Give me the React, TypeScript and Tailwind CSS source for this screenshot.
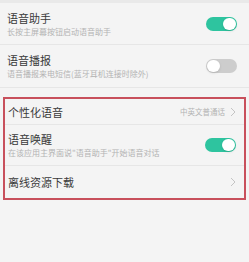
import React from 'react';

const font = { fontFamily: '"Noto Sans CJK SC", "Noto Sans", sans-serif' };

const Toggle: React.FC<{ on: boolean }> = ({ on }) => (
  <div
    className={`relative h-[14px] w-[31px] rounded-full ${on ? 'bg-[#2ec49f]' : 'bg-[#cdcdcd]'}`}
  >
    <div
      className={`absolute top-[1px] h-[12px] w-[13px] rounded-full bg-white shadow-sm ${on ? 'right-[1px]' : 'left-[1px]'}`}
    />
  </div>
);

const Chevron: React.FC = () => (
  <svg width="6" height="10" viewBox="0 0 6 10" className="ml-[5px]">
    <polyline points="1,1 5,5 1,9" fill="none" stroke="#c4c4c4" strokeWidth="1" />
  </svg>
);

const App: React.FC = () => {
  return (
    <div className="w-[249px] h-[262px] bg-[#f4f4f4] overflow-hidden" style={font}>
      <div className="h-[3px] bg-[#e9e9e9]" />

      <div className="h-[42px] flex items-center justify-between pl-[7px] pr-[12px] border-b border-[#e6e6e6]">
        <div className="flex flex-col">
          <span className="text-[11px] leading-[14px] text-[#3a3a3a]">语音助手</span>
          <span className="mt-[2px] text-[8px] leading-[10px] text-[#b3b3b3]">长按主屏幕按钮启动语音助手</span>
        </div>
        <Toggle on />
      </div>

      <div className="h-[43px] flex items-center justify-between pl-[7px] pr-[12px] border-b border-[#e6e6e6]">
        <div className="flex flex-col">
          <span className="text-[11px] leading-[14px] text-[#3a3a3a]">语音播报</span>
          <span className="mt-[2px] text-[8px] leading-[10px] text-[#b3b3b3]">语音播报来电短信(蓝牙耳机连接时除外)</span>
        </div>
        <Toggle on={false} />
      </div>

      <div className="mt-[9px] mx-[3px] border-2 border-[#c8505c]">
        <div className="h-[26px] flex items-center justify-between pl-[3px] pr-[8px] border-b border-[#e6e6e6]">
          <span className="text-[11px] leading-[14px] text-[#3a3a3a]">个性化语音</span>
          <div className="flex items-center">
            <span className="text-[7.5px] leading-[9px] text-[#b3b3b3]">中英文普通话</span>
            <Chevron />
          </div>
        </div>
        <div className="h-[41px] flex items-center justify-between pl-[3px] pr-[8px] border-b border-[#e6e6e6]">
          <div className="flex flex-col">
            <span className="text-[11px] leading-[14px] text-[#3a3a3a]">语音唤醒</span>
            <span className="mt-[2px] text-[8px] leading-[10px] text-[#b3b3b3]">在该应用主界面说"语音助手"开始语音对话</span>
          </div>
          <Toggle on />
        </div>
        <div className="h-[32px] flex items-center justify-between pl-[3px] pr-[8px]">
          <span className="text-[11px] leading-[14px] text-[#3a3a3a]">离线资源下载</span>
          <Chevron />
        </div>
      </div>
    </div>
  );
};

export default App;
